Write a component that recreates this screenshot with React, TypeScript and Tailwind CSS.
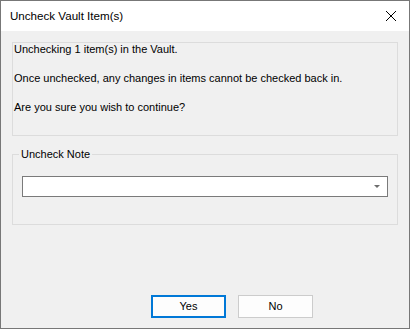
import React from "react";

export default function App() {
  return (
    <div className="w-[410px] h-[329px] border border-[#777777] bg-[#f0f0f0] flex flex-col font-['Liberation_Sans',Arial,sans-serif] text-[11px] leading-[13px] text-black overflow-hidden">
      <div className="h-[30px] bg-white flex items-center justify-between pl-[9px] pr-[9px] shrink-0">
        <span className="text-[11.6px] leading-[14px] text-black">Uncheck Vault Item(s)</span>
        <svg width="12" height="12" viewBox="0 0 12 12" className="mr-[3px]">
          <path d="M1 1 L11 11 M11 1 L1 11" stroke="#000" strokeWidth="1" fill="none" />
        </svg>
      </div>
      <div className="flex-1 flex flex-col px-[11px] pt-[11px] pb-[10px]">
        <div className="h-[94px] border border-[#dcdcdc] pl-[1px] pt-0 flex flex-col gap-[16px]">
          <div>Unchecking 1 item(s) in the Vault.</div>
          <div>Once unchecked, any changes in items cannot be checked back in.</div>
          <div>Are you sure you wish to continue?</div>
        </div>
        <fieldset className="mt-[12px] h-[77px] border border-[#dcdcdc] px-[9px] pt-[15px]">
          <legend className="ml-[-3px] px-[2px] leading-[13px]">Uncheck Note</legend>
          <div className="h-[21px] bg-white border border-[#7a7a7a] flex items-center justify-end pr-[7px]">
            <svg width="6" height="3" viewBox="0 0 6 3">
              <path d="M0 0 H6 L3 3 Z" fill="#6d6d6d" />
            </svg>
          </div>
        </fieldset>
        <div className="mt-auto flex gap-[12px] pl-[139px]">
          <button className="w-[75px] h-[23px] border-2 border-[#0078d7] bg-[#fdfdfd] text-[11px] leading-[13px] text-black">Yes</button>
          <button className="w-[75px] h-[23px] border border-[#cccccc] bg-[#fdfdfd] text-[11px] leading-[13px] text-black">No</button>
        </div>
      </div>
    </div>
  );
}
